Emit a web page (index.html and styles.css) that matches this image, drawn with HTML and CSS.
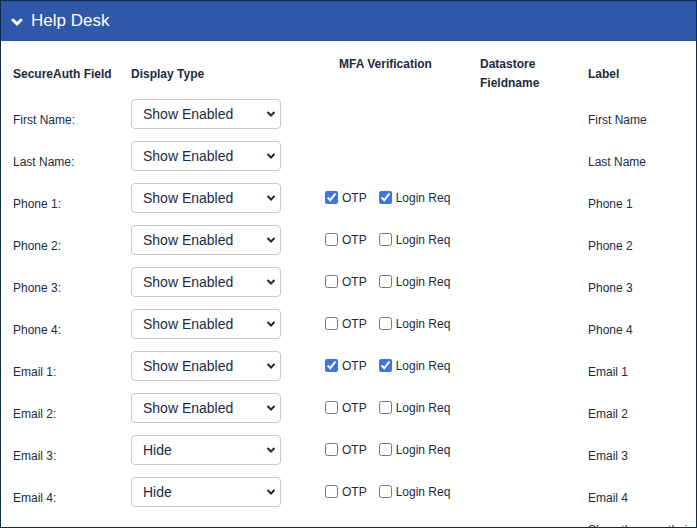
FILE: index.html
```html
<!DOCTYPE html>
<html>
<head>
   <meta charset="UTF-8">
   <link rel="stylesheet" href="styles.css">
</head>
<body>
<div class="panel">
   <div class="panel-head">
      <svg class="caret" width="12" height="10" viewBox="0 0 12 10">
         <polyline points="2,3 6,7 10,3" fill="none" stroke="#fff" stroke-width="3" stroke-linecap="round" stroke-linejoin="round"/>
      </svg>
      <span class="panel-title">Help Desk</span>
   </div>

   <div class="panel-body">
      <table class="fields">
         <colgroup>
            <col class="c-field">
            <col class="c-type">
            <col class="c-mfa">
            <col class="c-store">
            <col class="c-label">
         </colgroup>
         <tr class="head-row">
            <th>SecureAuth Field</th>
            <th>Display Type</th>
            <th class="mfa-head">MFA Verification</th>
            <th>Datastore<br>Fieldname</th>
            <th>Label</th>
         </tr>
         <tr>
            <td class="txt">First Name:</td>
            <td><div class="sel"><select><option>Show Enabled</option></select><svg class="chev" width="10" height="8" viewBox="0 0 10 8"><polyline points="1.5,2 5,5.5 8.5,2" fill="none" stroke="#1c2b40" stroke-width="2"/></svg></div></td>
            <td></td>
            <td></td>
            <td class="txt">First Name</td>
         </tr>
         <tr>
            <td class="txt">Last Name:</td>
            <td><div class="sel"><select><option>Show Enabled</option></select><svg class="chev" width="10" height="8" viewBox="0 0 10 8"><polyline points="1.5,2 5,5.5 8.5,2" fill="none" stroke="#1c2b40" stroke-width="2"/></svg></div></td>
            <td></td>
            <td></td>
            <td class="txt">Last Name</td>
         </tr>
         <tr>
            <td class="txt">Phone 1:</td>
            <td><div class="sel"><select><option>Show Enabled</option></select><svg class="chev" width="10" height="8" viewBox="0 0 10 8"><polyline points="1.5,2 5,5.5 8.5,2" fill="none" stroke="#1c2b40" stroke-width="2"/></svg></div></td>
            <td class="mfa"><label class="chk"><input type="checkbox" checked>OTP</label><label class="chk"><input type="checkbox" checked>Login Req</label></td>
            <td></td>
            <td class="txt">Phone 1</td>
         </tr>
         <tr>
            <td class="txt">Phone 2:</td>
            <td><div class="sel"><select><option>Show Enabled</option></select><svg class="chev" width="10" height="8" viewBox="0 0 10 8"><polyline points="1.5,2 5,5.5 8.5,2" fill="none" stroke="#1c2b40" stroke-width="2"/></svg></div></td>
            <td class="mfa"><label class="chk"><input type="checkbox">OTP</label><label class="chk"><input type="checkbox">Login Req</label></td>
            <td></td>
            <td class="txt">Phone 2</td>
         </tr>
         <tr>
            <td class="txt">Phone 3:</td>
            <td><div class="sel"><select><option>Show Enabled</option></select><svg class="chev" width="10" height="8" viewBox="0 0 10 8"><polyline points="1.5,2 5,5.5 8.5,2" fill="none" stroke="#1c2b40" stroke-width="2"/></svg></div></td>
            <td class="mfa"><label class="chk"><input type="checkbox">OTP</label><label class="chk"><input type="checkbox">Login Req</label></td>
            <td></td>
            <td class="txt">Phone 3</td>
         </tr>
         <tr>
            <td class="txt">Phone 4:</td>
            <td><div class="sel"><select><option>Show Enabled</option></select><svg class="chev" width="10" height="8" viewBox="0 0 10 8"><polyline points="1.5,2 5,5.5 8.5,2" fill="none" stroke="#1c2b40" stroke-width="2"/></svg></div></td>
            <td class="mfa"><label class="chk"><input type="checkbox">OTP</label><label class="chk"><input type="checkbox">Login Req</label></td>
            <td></td>
            <td class="txt">Phone 4</td>
         </tr>
         <tr>
            <td class="txt">Email 1:</td>
            <td><div class="sel"><select><option>Show Enabled</option></select><svg class="chev" width="10" height="8" viewBox="0 0 10 8"><polyline points="1.5,2 5,5.5 8.5,2" fill="none" stroke="#1c2b40" stroke-width="2"/></svg></div></td>
            <td class="mfa"><label class="chk"><input type="checkbox" checked>OTP</label><label class="chk"><input type="checkbox" checked>Login Req</label></td>
            <td></td>
            <td class="txt">Email 1</td>
         </tr>
         <tr>
            <td class="txt">Email 2:</td>
            <td><div class="sel"><select><option>Show Enabled</option></select><svg class="chev" width="10" height="8" viewBox="0 0 10 8"><polyline points="1.5,2 5,5.5 8.5,2" fill="none" stroke="#1c2b40" stroke-width="2"/></svg></div></td>
            <td class="mfa"><label class="chk"><input type="checkbox">OTP</label><label class="chk"><input type="checkbox">Login Req</label></td>
            <td></td>
            <td class="txt">Email 2</td>
         </tr>
         <tr>
            <td class="txt">Email 3:</td>
            <td><div class="sel"><select><option>Hide</option></select><svg class="chev" width="10" height="8" viewBox="0 0 10 8"><polyline points="1.5,2 5,5.5 8.5,2" fill="none" stroke="#1c2b40" stroke-width="2"/></svg></div></td>
            <td class="mfa"><label class="chk"><input type="checkbox">OTP</label><label class="chk"><input type="checkbox">Login Req</label></td>
            <td></td>
            <td class="txt">Email 3</td>
         </tr>
         <tr>
            <td class="txt">Email 4:</td>
            <td><div class="sel"><select><option>Hide</option></select><svg class="chev" width="10" height="8" viewBox="0 0 10 8"><polyline points="1.5,2 5,5.5 8.5,2" fill="none" stroke="#1c2b40" stroke-width="2"/></svg></div></td>
            <td class="mfa"><label class="chk"><input type="checkbox">OTP</label><label class="chk"><input type="checkbox">Login Req</label></td>
            <td></td>
            <td class="txt">Email 4</td>
         </tr>
         <tr class="more-row">
            <td></td>
            <td></td>
            <td></td>
            <td></td>
            <td class="more">Show the user their question</td>
         </tr>
      </table>
   </div>
</div>
</body>
</html>
```

FILE: styles.css
```css
body {
   margin: 0;
   font-family: "Liberation Sans", Arial, sans-serif;
   color: #1c2b40;
}

.panel {
   box-sizing: border-box;
   width: 697px;
   height: 528px;
   border: 1px solid #102a4c;
   overflow: hidden;
   background: #fff;
}

.panel-head {
   height: 40px;
   background: #2f58a8;
   display: flex;
   align-items: center;
   padding-left: 10px;
}

.caret {
   margin-right: 8px;
   margin-top: 1px;
}

.panel-title {
   color: #fff;
   font-size: 17px;
   line-height: 20px;
}

.panel-body {
   padding: 14px 0 0 12px;
}

.fields {
   border-collapse: collapse;
   table-layout: fixed;
   width: 682px;
   font-size: 12px;
}

.c-field { width: 118px; }
.c-type { width: 194px; }
.c-mfa { width: 155px; }
.c-store { width: 108px; }

.head-row {
   height: 38px;
}

.head-row th {
   padding: 0;
   text-align: left;
   font-weight: bold;
   line-height: 19px;
   vertical-align: middle;
}

.head-row th.mfa-head {
   vertical-align: top;
   padding-left: 14px;
}

.fields td {
   padding: 6px 0;
   vertical-align: middle;
   line-height: 14px;
}

.fields td.txt {
   padding-top: 18px;
}

.fields td.mfa {
   padding-top: 8px;
}

.fields td.more {
   vertical-align: top;
   padding-top: 10px;
}

.sel {
   position: relative;
   width: 150px;
}

.sel select {
   appearance: none;
   -webkit-appearance: none;
   box-sizing: border-box;
   width: 150px;
   height: 30px;
   border: 1px solid #c8c8c8;
   border-radius: 4px;
   background: #fff;
   padding: 0 0 0 11px;
   font-family: "Liberation Sans", Arial, sans-serif;
   font-size: 14px;
   color: #1c2b40;
}

.chev {
   position: absolute;
   right: 5px;
   top: 11px;
}

.chk {
   display: inline-flex;
   align-items: center;
   margin-right: 12px;
}

.chk input {
   width: 13px;
   height: 13px;
   margin: 0 4px 0 0;
   accent-color: #3f74e4;
}
```
